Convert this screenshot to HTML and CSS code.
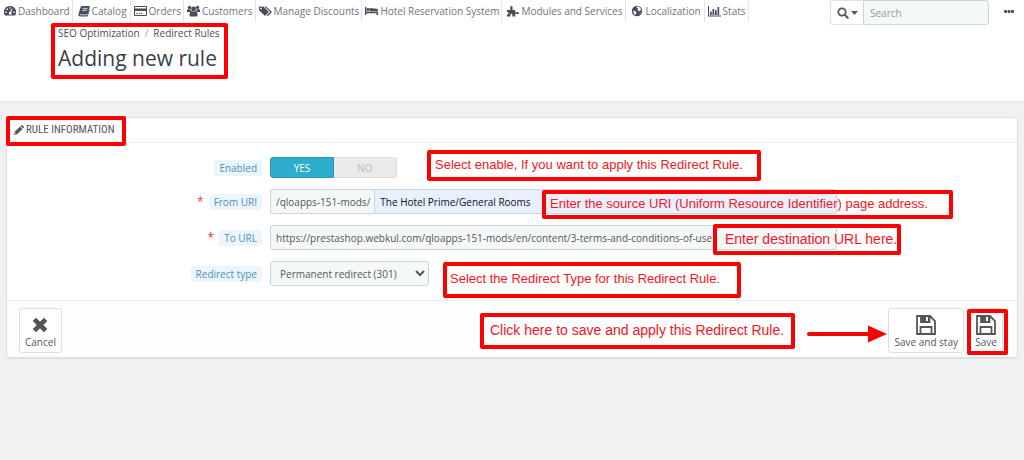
FILE: index.html
```html
<!DOCTYPE html>
<html lang="en">
<head>
<meta charset="utf-8">
<title>Adding new rule</title>
<link rel="stylesheet" href="styles.css">
</head>
<body>
<header class="header">
  <div class="topbar">
    <nav class="menu">
      <a class="menu-item" href="#"><svg class="icon" width="12" height="12" viewBox="0 0 12 12"><path fill="currentColor" fill-rule="evenodd" d="M6 1a6 6 0 0 0-5 9.500h10A6 6 0 0 0 6 1ZM5.300 2.200h1.400v1.400H5.300ZM2.500 3.500h1.400v1.400H2.500ZM1.300 6.500h1.400v1.400H1.300ZM9.400 6.500h1.400v1.400H9.400ZM7.600 3.600l.9.400-1.400 3.200a1.400 1.400 0 1 1-1-.3Z"/></svg>Dashboard</a>
      <a class="menu-item wide" href="#"><svg class="icon" width="12" height="12" viewBox="0 0 12 12"><path fill="currentColor" d="M4 1h7q1 0 .8 1L9.800 8.500q-.3 1-1.200 1H2.200q-.7.200-.4.700h7.400L11.500 4l.3 1L9.900 10.700q-.3.800-1 .8H1.700Q0 11.200.3 9.500L2.700 2Q3 1 4 1Z"/><path stroke="#fff" stroke-width=".8" d="M4.700 3.400h4.800M4.100 5.300h4.800"/></svg>Catalog</a>
      <a class="menu-item" href="#"><svg class="icon" width="13" height="12" viewBox="0 0 13 12"><path fill="currentColor" fill-rule="evenodd" d="M1 1h11q1 0 1 1v8q0 1-1 1H1q-1 0-1-1V2Q0 1 1 1ZM1 2v1.500h11V2ZM1 6v4h11V6ZM2 8.200h2V9H2ZM5 8.200h3V9H5Z"/></svg>Orders</a>
      <a class="menu-item" href="#"><svg class="icon" width="13" height="12" viewBox="0 0 13 12"><g fill="currentColor"><circle cx="2.500" cy="2.400" r="1.700"/><circle cx="10.500" cy="2.400" r="1.700"/><circle cx="6.500" cy="4" r="2.400"/><path d="M0 7V5.500Q0 4 1 4l2.600.500.400 2.500ZM13 7V5.500Q13 4 12 4l-2.600.500L9 7ZM2.500 10.500q0-4.500 2-4.500 2 1.300 4 0 2 0 2 4.500 0 1-1.500 1H4q-1.500 0-1.500-1Z"/></g></svg>Customers</a>
      <a class="menu-item" href="#"><svg class="icon" width="13" height="12" viewBox="0 0 13 12"><path fill="currentColor" fill-rule="evenodd" d="M0 1.500h4.200L9.500 6.500q.5.500 0 1L6.500 10.500q-.5.500-1 0L0 5.200ZM2 2.500a.9.900 0 1 0 .1 0ZM5.300 1.500h1.700L12.500 6.500q.5.500 0 1L9 11l-1.100-.7 2.900-2.800q.4-.5 0-1Z"/></svg>Manage Discounts</a>
      <a class="menu-item" href="#"><svg class="icon" width="13" height="12" viewBox="0 0 13 12"><path fill="currentColor" d="M0 2h1.400v4.500H13V10h-1.400V8.200H1.400V10H0ZM4.500 3l7 .8q1.500.2 1.500 1.700V6H4.700Z"/><circle cx="3" cy="4.500" r="1.400" fill="currentColor"/></svg>Hotel Reservation System</a>
      <a class="menu-item wide" href="#"><svg class="icon" width="12" height="12" viewBox="0 0 12 12"><path fill="currentColor" d="M0 5h2.800q1 0 .5-1Q2.700 1 4.400 1T5.500 4q-.4 1 .7 1h2v2q.2.700 1 .300Q12 6.400 12 8T9.200 8.800Q8.300 8.500 8.200 9v2.500H5.600q-.6-.2-.2-1Q5.700 8.800 4.400 8.800t-1 1.700q.4.800-.2 1H0V9.300q1.500.5 1.500-1T0 7.200Z"/></svg>Modules and Services</a>
      <a class="menu-item wide" href="#"><svg class="icon" width="12" height="12" viewBox="0 0 12 12"><circle cx="6" cy="6" r="5.200" fill="currentColor"/><path fill="#fff" d="M5.500 1.500 8 1.700 10 4 9.200 6.200 7.800 6 6.300 4.700 7.500 3.500 6 3ZM2 5.500l2.500.8.900 1.200L4.500 10 3.200 9ZM8.500 7.700l1.200-.2-.7 1.300Z"/></svg>Localization</a>
      <a class="menu-item" href="#"><svg class="icon" width="13" height="12" viewBox="0 0 13 12"><path fill="currentColor" d="M0 1h1v9.500h12v1H0ZM2 6.500h1.700V10H2ZM4.500 4h1.700v6H4.500ZM7 5.200h1.700V10H7ZM9.500 2h1.700v8H9.500Z"/></svg>Stats</a>
    </nav>
    <form class="search">
      <button class="search-type" type="button" aria-label="Search scope"><svg width="21" height="12" viewBox="0 0 21 12"><circle cx="5" cy="5" r="3.700" fill="none" stroke="currentColor" stroke-width="1.800"/><path d="m7.700 7.700 3 3" stroke="currentColor" stroke-width="2" stroke-linecap="round"/><path fill="currentColor" d="M14 4h7l-3.500 4Z"/></svg></button>
      <input class="search-input" type="text" placeholder="Search" aria-label="Search">
    </form>
    <button class="more" type="button" aria-label="More"><svg width="10" height="4" viewBox="0 0 10 4"><g fill="currentColor"><rect y="0" width="3" height="3" rx="1"/><rect x="3.500" width="3" height="3" rx="1"/><rect x="7" width="3" height="3" rx="1"/></g></svg></button>
  </div>
  <div class="page-head">
    <div class="breadcrumb"><a href="#">SEO Optimization</a><span class="slash">/</span><a href="#">Redirect Rules</a></div>
    <h1 class="title">Adding new rule</h1>
  </div>
</header>

<main class="content">
  <form class="panel">
    <h2 class="panel-heading"><svg width="10" height="10" viewBox="0 0 10 10"><path fill="currentColor" fill-rule="evenodd" d="M0 10 .7 6.800 6 1.500 8.500 4 3.200 9.300ZM1.400 7.500l-.3 1.400 1.400-.3ZM6.600.9l.6-.6q.6-.5 1.200 0l1.300 1.300q.5.600 0 1.200l-.6.600Z"/></svg>RULE INFORMATION</h2>
    <div class="rows">
      <div class="row">
        <div class="label-cell"><span class="label" id="enabled">Enabled</span></div>
        <div class="switch" role="group" aria-labelledby="enabled"><button class="switch-yes" type="button">YES</button><button class="switch-no" type="button">NO</button></div>
      </div>
      <div class="row">
        <div class="label-cell"><span class="required">*</span><label class="label" for="from">From URI</label></div>
        <div class="group"><span class="prefix">/qloapps-151-mods/</span><input class="field filled" id="from" type="text" value="The Hotel Prime/General Rooms"></div>
      </div>
      <div class="row">
        <div class="label-cell"><span class="required">*</span><label class="label" for="to">To URL</label></div>
        <input class="field" id="to" type="text" value="https://prestashop.webkul.com/qloapps-151-mods/en/content/3-terms-and-conditions-of-use">
      </div>
      <div class="row">
        <div class="label-cell"><label class="label" for="type">Redirect type</label></div>
        <select class="select" id="type"><option>Permanent redirect (301)</option></select>
      </div>
    </div>
    <div class="panel-footer">
      <button class="action" type="button"><svg width="22" height="22" viewBox="0 0 22 22"><path d="m7 7 8 8M15 7l-8 8" stroke="currentColor" stroke-width="4.600" stroke-linecap="square"/></svg>Cancel</button>
      <div class="actions">
        <button class="action" type="button"><svg width="22" height="22" viewBox="0 0 22 22"><path fill="none" stroke="currentColor" stroke-width="1.800" d="M2 2h13l5 5v13H2ZM5.500 20v-7h11v7M6 2v6h8.500V2"/><path fill="currentColor" d="M6 2h5v6H6ZM13 2h2v6h-2Z"/></svg>Save and stay</button>
        <button class="action" type="button"><svg width="22" height="22" viewBox="0 0 22 22"><path fill="none" stroke="currentColor" stroke-width="1.800" d="M2 2h13l5 5v13H2ZM5.500 20v-7h11v7M6 2v6h8.500V2"/><path fill="currentColor" d="M6 2h5v6H6ZM13 2h2v6h-2Z"/></svg>Save</button>
      </div>
    </div>
  </form>
</main>

<div class="note note-title"></div>
<div class="note note-heading"></div>
<div class="note small note-enabled">Select enable, If you want to apply this Redirect Rule.</div>
<div class="note small note-from">Enter the source URI (Uniform Resource Identifier) page address.</div>
<div class="note note-to">Enter destination URL here.</div>
<div class="note small note-type">Select the Redirect Type for this Redirect Rule.</div>
<div class="note note-click">Click here to save and apply this Redirect Rule.</div>
<div class="note note-save"></div>
<svg class="arrow" width="82" height="18" viewBox="0 0 82 18"><path d="M3 9h62" stroke="#f00" stroke-width="4" stroke-linecap="round"/><path fill="#f00" d="M62 0.500 81 9 62 17.500Z"/></svg>
</body>
</html>
```
FILE: styles.css
```css
* { box-sizing: border-box; }
body {
  margin: 0;
  min-height: 100vh;
  position: relative;
  background: #eff1f2;
  color: #555;
  font: 10px/16px "Open Sans", "Noto Sans", sans-serif;
}
button, input, select { font: inherit; color: inherit; margin: 0; }
a { color: inherit; text-decoration: none; }
svg { flex: none; }

.header {
  background: #fff;
  border-bottom: 1px solid #e3e6e7;
  padding-bottom: 26px;
}
.topbar { display: flex; align-items: flex-start; height: 25px; padding-right: 10px; }
.menu { display: flex; padding-left: 1px; }
.menu-item {
  display: flex;
  align-items: center;
  gap: 2px;
  height: 22px;
  padding: 0 2px 0 3px;
  border-right: 1px solid #e6e6e6;
  color: #6c7480;
  white-space: nowrap;
}
.menu-item.wide { padding: 0 3px 0 5px; }
.icon { color: #454d5a; }
.search { display: flex; width: 159px; height: 25px; margin-left: auto; }
.search-type {
  width: 33px;
  padding: 0;
  border: 1px solid #dde2e5;
  border-right: 0;
  border-radius: 3px 0 0 3px;
  background: #fff;
  display: flex;
  align-items: center;
  justify-content: center;
}
.search-input {
  flex: 1;
  min-width: 0;
  padding: 0 6px;
  border: 1px solid #c7d6db;
  border-radius: 0 3px 3px 0;
  background: #f5f8f9;
}
.search-input::placeholder { color: #999; }
.more {
  display: flex;
  align-items: center;
  height: 24px;
  margin-left: 15px;
  padding: 0;
  border: 0;
  background: none;
  color: #4a4f58;
}
.page-head { padding-left: 58px; }
.breadcrumb { display: flex; gap: 5px; line-height: 17px; color: #4a4f58; }
.slash { color: #72c279; }
.title { margin: 0; font-size: 21px; line-height: 33px; font-weight: 400; color: #3a3f47; }

.content { padding: 15px 6px 0; }
.panel {
  background: #fff;
  border: 1px solid #dcdfe2;
  border-radius: 4px;
  box-shadow: 0 1px 1px #dde0e3;
}
.panel-heading {
  display: flex;
  align-items: center;
  gap: 2px;
  margin: 0;
  height: 25px;
  padding-left: 7px;
  border-bottom: 1px solid #eaedef;
  font: 400 11px/16px "Ubuntu Condensed", "Roboto Condensed", "Liberation Sans Narrow", "Open Sans", sans-serif;
  color: #555;
}
.rows { display: grid; gap: 11px; padding: 14px 0; }
.row {
  display: grid;
  grid-template-columns: 255fr 567fr 172fr;
  column-gap: 8px;
  align-items: center;
}
.label-cell { display: flex; justify-content: flex-end; gap: 5px; }
.label {
  padding: 0 5px;
  border-radius: 3px;
  background: #ebf5fa;
  color: #4a94bd;
}
.required { color: #f33; font-size: 12px; }
.switch {
  display: flex;
  width: 127px;
  height: 21px;
}
.switch button { flex: 1; padding: 0; }
.switch-yes { border: 1px solid #2597b7; border-radius: 3px 0 0 3px; background: #2eacce; color: #fff; }
.switch .switch-no { border: 1px solid #ddd; border-left: 0; border-radius: 0 3px 3px 0; background: #ebebeb; color: #bbb; }
.group { display: flex; }
.prefix {
  height: 25px;
  padding: 4px 4px 4px 5px;
  border: 1px solid #c7d6db;
  border-right: 0;
  border-radius: 3px 0 0 3px;
  background: #f5f8f9;
}
.field {
  width: 100%;
  min-width: 0;
  height: 25px;
  padding: 0 5px;
  border: 1px solid #c7d6db;
  border-radius: 3px;
  background: #f5f8f9;
}
.filled { flex: 1; border-radius: 0 3px 3px 0; background: #e8f0fe; color: #111; }
.select {
  width: 159px;
  height: 25px;
  padding: 0 5px;
  border: 1px solid #c7d6db;
  border-radius: 3px;
  background-color: #f5f8f9;
}
.panel-footer {
  display: flex;
  justify-content: space-between;
  padding: 7px 14px 4px 12px;
  border-top: 1px solid #eceef0;
  border-radius: 0 0 4px 4px;
  background: #fcfdfe;
}
.actions { display: flex; gap: 5px; }
.action {
  display: flex;
  flex-direction: column;
  align-items: center;
  height: 45px;
  padding: 5px 5px 0;
  border: 1px solid #ddd;
  border-radius: 3px;
  background: #fff;
  line-height: 13px;
}

.note {
  position: absolute;
  display: flex;
  align-items: center;
  border: 4px solid #f00;
  border-radius: 2px;
  color: #f8141c;
  font: 14px/16px "Liberation Sans", Arial, sans-serif;
  white-space: nowrap;
}
.note.small { font-size: 13px; }
.note-title { left: 51px; top: 23px; width: 177px; height: 56px; }
.note-heading { left: 6px; top: 116px; width: 120px; height: 30px; }
.note-enabled { left: 427px; top: 150px; width: 334px; height: 31px; padding: 0 0 2px 4px; }
.note-from { left: 542px; top: 190px; width: 411px; height: 29px; padding: 0 0 2px 4px; }
.note-to { left: 713px; top: 224px; width: 188px; height: 31px; padding: 0 0 2px 8px; }
.note-type { left: 443px; top: 262px; width: 298px; height: 36px; padding: 0 0 2px 3px; }
.note-click { left: 480px; top: 313px; width: 315px; height: 36px; padding: 0 0 2px 6px; }
.note-save { left: 967px; top: 309px; width: 41px; height: 46px; }
.arrow { position: absolute; left: 806px; top: 325px; }
```
